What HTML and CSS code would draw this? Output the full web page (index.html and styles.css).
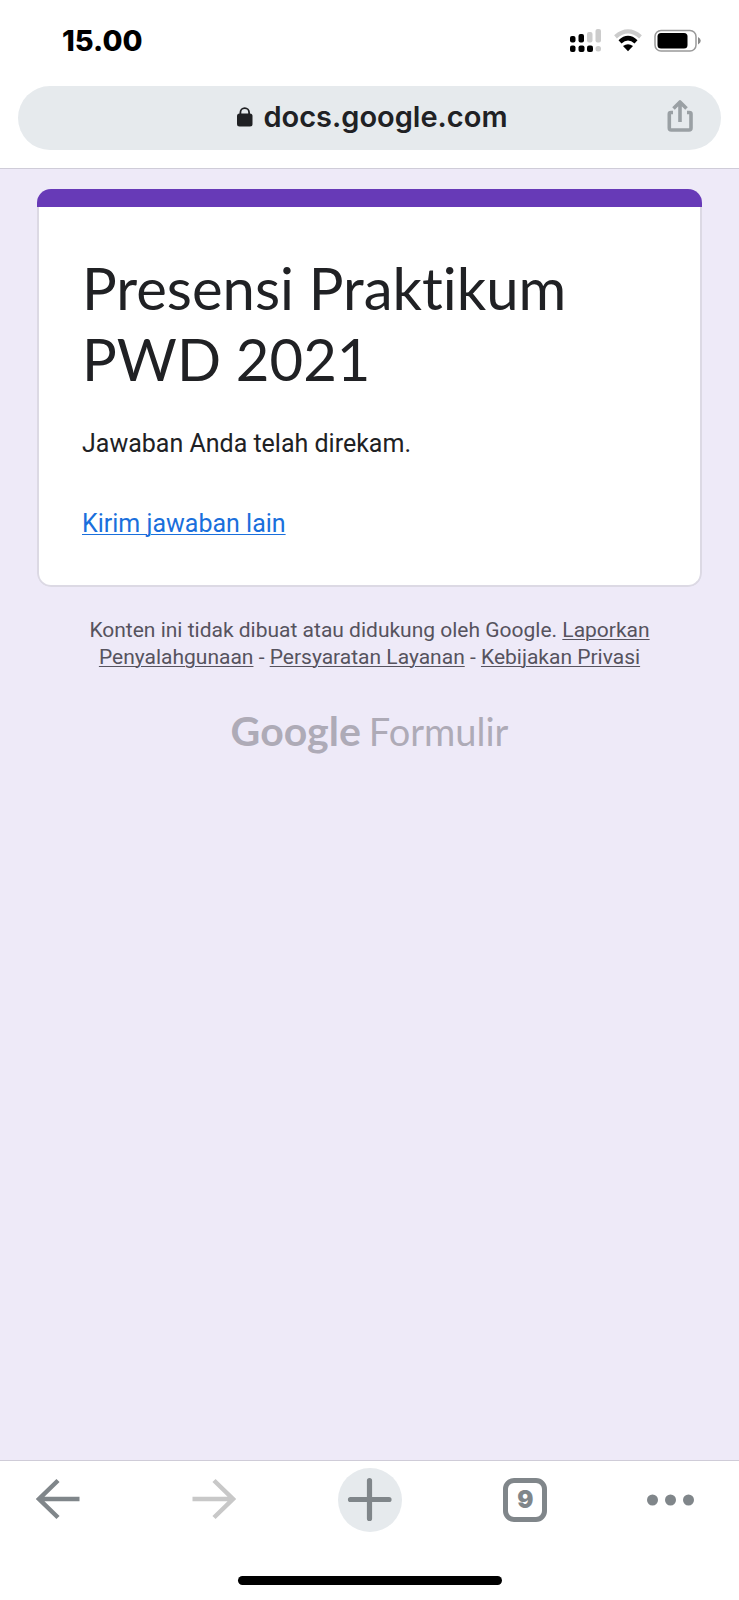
FILE: index.html
```html
<!DOCTYPE html>
<html lang="id">
<head>
<meta charset="utf-8">
<meta name="viewport" content="width=device-width, initial-scale=1">
<title>Presensi Praktikum PWD 2021</title>
<link rel="stylesheet" href="styles.css">
</head>
<body>
<header class="top">
  <div class="status">
    <time class="clock">15.00</time>
    <div class="indicators">
      <svg width="32" height="24" viewBox="0 0 32 24" role="img" aria-label="Sinyal">
        <g fill="#000"><rect x="0" y="7" width="5.500" height="6.500" rx="2"/><rect x="8.500" y="5" width="5.500" height="8.500" rx="2"/><rect x="0" y="16.500" width="5.500" height="6.500" rx="2"/><rect x="8.500" y="16.500" width="6" height="6.500" rx="2"/><rect x="17" y="16.500" width="6" height="6.500" rx="2"/></g>
        <g fill="#ccc"><rect x="17" y="3" width="5.500" height="10.500" rx="2"/><rect x="25.500" y="0" width="5.500" height="13.500" rx="2"/><rect x="25.500" y="17" width="5.500" height="5.500" rx="2.500"/></g>
      </svg>
      <svg width="28" height="24" viewBox="0 0 28 24" fill="none" role="img" aria-label="Wi-Fi">
        <path d="M1.500 7.800Q14-3 26.500 7.800" stroke="#ccc" stroke-width="4.200"/>
        <path d="M6 12.800Q14 5.500 22 12.800" stroke="#000" stroke-width="4.400"/>
        <path d="M9 17q5-3.600 10 0l-5 5.300z" fill="#000"/>
      </svg>
      <svg width="48" height="24" viewBox="0 0 48 24" role="img" aria-label="Baterai">
        <rect x="1" y="1.500" width="41" height="20.500" rx="6" fill="none" stroke="#999" stroke-width="1.500"/>
        <rect x="3.500" y="4" width="30" height="15.500" rx="3.500" fill="#000"/>
        <path d="M44 8q5.500 3.700 0 7.500z" fill="#888"/>
      </svg>
    </div>
  </div>
  <div class="address">
    <span></span>
    <button class="site" type="button">
      <svg width="16" height="20" viewBox="0 0 16 20" aria-hidden="true"><rect x="0" y="6.500" width="15.500" height="13" rx="2.500" fill="#202124"/><path d="M3.400 8V5.500a4.350 4.350 0 0 1 8.700 0V8" fill="none" stroke="#202124" stroke-width="1.800"/></svg>
      docs.google.com
    </button>
    <button class="share" type="button" aria-label="Bagikan">
      <svg width="26" height="34" viewBox="0 0 26 34" fill="none" stroke="#9aa0a4" stroke-width="3.600" stroke-linejoin="round"><path d="M6 12.500H4Q2.300 12.500 2.300 14V28Q2.300 30 4.300 30H22Q24 30 24 28V14Q24 12.500 22.300 12.500H20M13 22V3M6.500 8.500L13 2L19.500 8.500"/></svg>
    </button>
  </div>
</header>
<main class="page">
  <section class="card">
    <div class="stripe"></div>
    <div class="card-body">
      <h1>Presensi Praktikum PWD 2021</h1>
      <p>Jawaban Anda telah direkam.</p>
      <a class="again" href="#">Kirim jawaban lain</a>
    </div>
  </section>
  <p class="legal">Konten ini tidak dibuat atau didukung oleh Google. <a href="#">Laporkan Penyalahgunaan</a> - <a href="#">Persyaratan Layanan</a> - <a href="#">Kebijakan Privasi</a></p>
  <a class="brand" href="#"><span class="brand-google">Google</span> <span>Formulir</span></a>
</main>
<footer class="bottom">
  <nav class="tools">
    <button type="button" aria-label="Kembali"><svg width="44" height="44" viewBox="0 0 44 44" fill="none" stroke="#80868a" stroke-width="4.500"><path d="M43.500 21H3M22 2.500L3 21L22 39.500"/></svg></button>
    <button type="button" aria-label="Maju"><svg width="44" height="44" viewBox="0 0 44 44" fill="none" stroke="#c8c8c8" stroke-width="4.500"><path d="M.5 21H41M22 2.500L41 21L22 39.500"/></svg></button>
    <button type="button" aria-label="Tab baru"><svg width="64" height="64" viewBox="0 0 64 64"><circle cx="32" cy="32" r="32" fill="#e6eaed"/><path d="M31.500 12.500V50.500M12.500 31.500H51" stroke="#80868a" stroke-width="5.200" stroke-linecap="round"/></svg></button>
    <button type="button" aria-label="9 tab"><span class="count">9</span></button>
    <button class="more" type="button" aria-label="Menu"><svg width="48" height="12" viewBox="0 0 48 12" fill="#80868a"><circle cx="5.500" cy="6" r="5.500"/><circle cx="23.500" cy="6" r="5.500"/><circle cx="41.500" cy="6" r="5.500"/></svg></button>
  </nav>
  <div class="home"></div>
</footer>
</body>
</html>
```
FILE: styles.css
```css
* { box-sizing: border-box; }
body {
  margin: 0;
  min-height: 100vh;
  display: flex;
  flex-direction: column;
  background: #eeeaf8;
  color: #202124;
  font-family: Roboto, "Noto Sans", sans-serif;
}
button { border: 0; padding: 0; background: none; font: inherit; color: inherit; }
svg { display: block; flex: none; }
h1, p { margin: 0; }
a { color: inherit; text-underline-offset: 2px; text-decoration-thickness: 1px; }

.top {
  padding: 0 18px 18px;
  background: #fff;
  border-bottom: 1px solid #cfccd8;
}
.status {
  height: 86px;
  padding: 4px 19px 8px 44px;
  display: flex;
  align-items: center;
  justify-content: space-between;
}
.clock { font: 800 29px/36px Inter, sans-serif; color: #000; }
.indicators { display: flex; gap: 12px; }
.address {
  height: 64px;
  padding: 0 26px 2px 28px;
  border-radius: 32px;
  background: #e6eaed;
  display: grid;
  grid-template-columns: 1fr auto 1fr;
  align-items: center;
}
.site {
  display: flex;
  align-items: center;
  gap: 10px;
  padding-left: 4px;
  font: 600 29px/36px Inter, sans-serif;
}
.share { justify-self: end; padding-right: 2px; }

.page {
  flex: 1;
  display: flex;
  flex-direction: column;
  align-items: center;
  padding: 20px 37px;
}
.card {
  align-self: stretch;
  border-radius: 14px;
  overflow: hidden;
}
.stripe { height: 18px; background: #673ab7; }
.card-body {
  padding: 45px 43px 43px;
  background: #fff;
  border: 2px solid #dcd9e4;
  border-top: 0;
  border-radius: 0 0 14px 14px;
  display: flex;
  flex-direction: column;
  align-items: flex-start;
  font-size: 25px;
  line-height: 36px;
}
h1 {
  margin-bottom: 32px;
  font: 400 58px/71px Lato, sans-serif;
  font-variant-ligatures: none;
}
.again { margin-top: 44px; color: #1a6fdc; }
.legal {
  margin-top: 30px;
  font-size: 21px;
  line-height: 27px;
  text-align: center;
  color: #56535e;
}
.brand {
  margin-top: 36px;
  display: flex;
  align-items: baseline;
  gap: 8px;
  font: 400 38px/48px Lato, sans-serif;
  color: #aeabb7;
  text-decoration: none;
}
.brand-google { font-size: 41px; font-weight: 700; }

.bottom {
  padding-top: 7px;
  background: #fff;
  border-top: 1px solid #cfccd8;
}
.tools {
  display: flex;
  align-items: center;
  justify-content: space-between;
  padding: 0 46px 0 24px;
}
.tools button { width: 68px; height: 64px; display: flex; align-items: center; justify-content: center; }
.tools .more { width: 46px; justify-content: flex-start; }
.count {
  width: 44px;
  height: 44px;
  border: 5px solid #80868a;
  border-radius: 11px;
  font: 900 24px/34px Inter, sans-serif;
  color: #80868a;
}
.home {
  width: 264px;
  height: 9px;
  margin: 44px auto 15px;
  border-radius: 5px;
  background: #000;
}
```
